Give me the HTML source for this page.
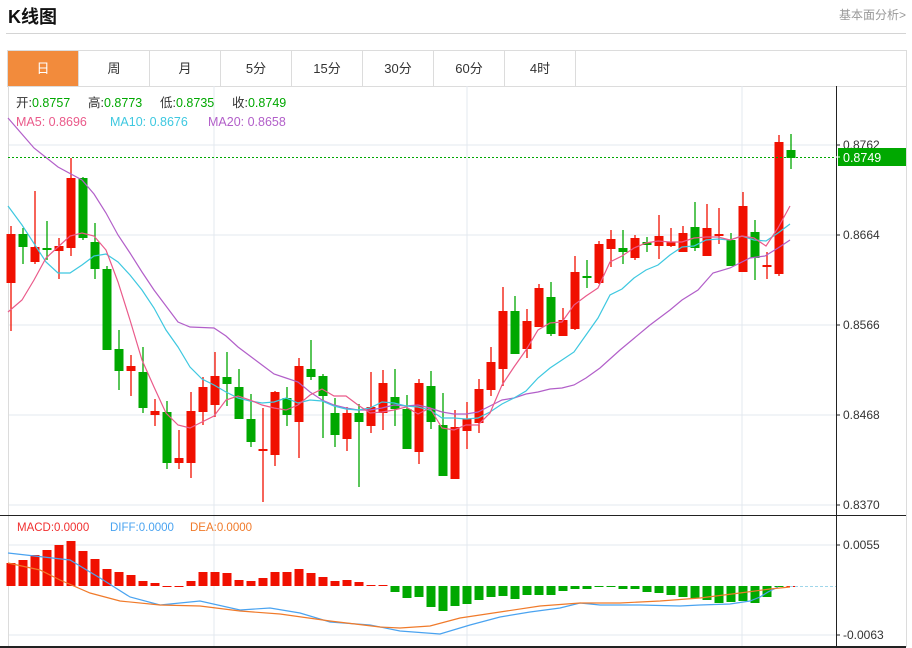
<!DOCTYPE html>
<html><head><meta charset="utf-8"><style>
body{margin:0;width:912px;height:648px;background:#fff;font-family:"Liberation Sans","Noto Sans CJK SC",sans-serif;overflow:hidden;position:relative}
.t{position:absolute;left:8px;top:3px;font-size:18px;font-weight:bold;color:#111}
.r{position:absolute;right:6px;top:6px;font-size:12px;color:#999}
.hr{position:absolute;left:6px;top:33px;width:900px;height:1px;background:#d4d4d4}
.tabs{position:absolute;left:7px;top:50px;width:898px;height:35px;border:1px solid #dcdcdc;display:flex}
.tabs div{width:70px;border-right:1px solid #dcdcdc;text-align:center;line-height:35px;font-size:13px;color:#333}
.tabs div.a{background:#f28b3c;color:#fff}
svg{position:absolute;left:0;top:0}
</style></head><body>
<div class="t">K线图</div><div class="r">基本面分析&gt;</div><div class="hr"></div>
<div class="tabs"><div class="a">日</div><div>周</div><div>月</div><div>5分</div><div>15分</div><div>30分</div><div>60分</div><div>4时</div></div>
<svg id="s" width="912" height="648" xmlns="http://www.w3.org/2000/svg" font-family="Liberation Sans, Noto Sans CJK SC, sans-serif"></svg>
<script>
var C=[[1,234,283,226,331],[0,234,247,228,264],[1,247,262,191,264],[0,248,250,221,260],[1,246,251,238,279],[1,178,248,158,256],[0,178,238,177,240],[0,242,269,223,279],[0,269,350,266,350],[0,349,371,330,390],[1,366,371,355,396],[0,372,408,347,413],[1,411,415,399,426],[0,412,463,401,469],[1,458,463,430,469],[1,411,463,392,478],[1,387,412,377,425],[1,376,405,352,417],[0,377,384,352,406],[0,387,419,369,419],[0,419,442,394,447],[1,449,451,408,502],[1,392,455,391,466],[0,398,415,387,426],[1,366,422,358,458],[0,369,377,340,380],[0,376,396,374,438],[0,413,435,398,447],[1,413,439,407,451],[0,413,422,404,487],[1,407,426,372,433],[1,383,413,370,430],[0,397,409,369,426],[0,409,449,395,449],[1,383,452,379,464],[0,386,422,371,429],[0,425,476,393,476],[1,427,479,410,479],[1,419,431,402,449],[1,389,423,379,433],[1,362,390,347,396],[1,311,369,287,386],[0,311,354,296,354],[1,321,349,309,358],[1,288,327,284,327],[0,297,334,282,336],[1,320,336,308,336],[1,272,329,256,330],[0,276,278,260,288],[1,244,283,241,284],[1,239,249,230,267],[0,248,252,230,264],[1,238,258,235,260],[0,242,245,237,252],[1,236,246,215,259],[1,242,246,228,247],[1,233,252,226,252],[0,227,248,202,251],[1,228,256,204,256],[1,234,236,208,244],[0,240,266,233,266],[1,206,272,192,272],[0,232,258,220,280],[1,265,267,252,279],[1,142,274,135,276],[0,150,158,134,169]];
var M=[563,560,555,550,545,541,551,559,569,572,575,581,583,586,586,581,572,572,573,580,581,578,572,572,569,573,577,581,580,582,585,585,592,598,597,607,611,606,604,600,597,596,599,595,595,595,591,589,589,587,587,589,589,592,593,595,597,598,600,603,602,601,603,597,586,586];
var P={ma20:["#b25fc9","8,118 34,148 58,167 82,180 94,194 106,213 118,235 130,253 142,272 154,290 166,306 178,322 190,327 214,328 226,336 238,347 250,356 262,365 274,374 286,378 298,382 310,392 322,400 334,405 346,408 358,410 370,410 382,408 394,405 406,406 418,405 430,408 442,412 454,414 466,414 478,412 490,406 502,400 514,398 526,394 538,392 550,389 562,388 574,385 586,378 600,368 620,350 650,325 670,310 682,300 698,290 713,273 730,268 750,258 765,256 778,248 790,240"],
ma10:["#3ec8e0","8,206 22,225 46,262 58,273 70,273 82,265 94,256 106,254 118,262 130,275 142,290 154,308 166,330 178,347 190,367 202,379 214,385 226,392 238,398 250,401 262,403 274,402 286,398 298,403 310,400 322,401 334,406 346,409 358,410 370,408 382,402 394,403 406,406 418,407 430,410 442,418 454,418 466,419 478,418 490,412 502,404 514,398 526,391 538,378 550,368 562,360 574,352 586,335 598,318 610,295 622,289 634,278 646,270 658,265 670,255 682,247 694,246 706,240 718,239 730,240 742,236 754,240 766,241 778,233 790,224"],
ma5:["#ea5a8a","8,312 22,300 34,280 46,258 58,247 70,236 82,233 94,236 106,250 118,282 130,320 142,360 154,387 166,413 178,425 190,428 202,422 214,416 226,400 238,396 250,400 262,405 274,408 286,410 298,405 310,395 322,389 334,396 346,396 358,405 370,413 382,412 394,410 406,407 418,414 430,408 442,428 454,430 466,425 478,425 490,413 502,385 514,367 526,350 538,330 550,323 562,322 574,305 586,296 598,288 610,262 622,256 634,248 646,243 658,241 670,242 682,242 694,238 706,237 718,237 730,240 742,236 754,238 766,246 778,228 790,206"],
diff:["#4aa3f0","8,553 70,560 100,578 130,597 160,605 200,601 240,610 270,608 300,613 330,622 370,625 400,631 440,634 470,625 500,617 530,612 560,608 580,603 600,605 640,605 680,606 700,605 730,604 750,601 760,597 768,592 778,587"],
dea:["#f07a2a","8,563 40,570 60,580 90,593 120,601 160,605 200,606 240,611 280,614 330,621 380,627 400,628 430,626 460,618 500,612 540,606 580,603 620,603 660,601 700,598 740,593 770,589 790,587"]};
var s='';
[145,235,325,415,505,545,635].forEach(function(y){s+='<line x1="8" x2="836" y1="'+y+'" y2="'+y+'" stroke="#e3e9ef"/>';});
[214,467,742].forEach(function(x){s+='<line x1="'+x+'" x2="'+x+'" y1="86" y2="647" stroke="#e3e9ef"/>';});
s+='<line x1="8.5" x2="8.5" y1="86" y2="647" stroke="#dcdcdc"/><line x1="906.5" x2="906.5" y1="86" y2="647" stroke="#dcdcdc"/>';
C.forEach(function(c,i){var x=11+12*i,col=c[0]?'#f01000':'#00a800';s+='<line x1="'+x+'" x2="'+x+'" y1="'+c[3]+'" y2="'+c[4]+'" stroke="'+col+'" stroke-width="1.3"/><rect x="'+(x-4.5)+'" y="'+c[1]+'" width="9" height="'+Math.max(1.5,c[2]-c[1])+'" fill="'+col+'"/>';});
M.forEach(function(v,i){var x=11+12*i,col=(i<32||i==65)?'#f01000':'#00a800';var y1=Math.min(v,586),h=Math.max(1,Math.abs(v-586));s+='<rect x="'+(x-4.5)+'" y="'+y1+'" width="9" height="'+h+'" fill="'+col+'"/>';});
s+='<line x1="790" x2="836" y1="586.5" y2="586.5" stroke="#9fd6ea" stroke-dasharray="3,2"/>';
for(var k in P)s+='<polyline points="'+P[k][1]+'" fill="none" stroke="'+P[k][0]+'" stroke-width="1.2"/>';
s+='<line x1="8" x2="836" y1="157.5" y2="157.5" stroke="#00a800" stroke-dasharray="2,2"/>';
s+='<line x1="0" x2="906" y1="515.5" y2="515.5" stroke="#222"/><line x1="0" x2="906" y1="647" y2="647" stroke="#222" stroke-width="2"/><line x1="836.5" x2="836.5" y1="86" y2="648" stroke="#222"/>';
[[145,'0.8762'],[235,'0.8664'],[325,'0.8566'],[415,'0.8468'],[505,'0.8370'],[545,'0.0055'],[635,'-0.0063']].forEach(function(a){s+='<line x1="836" x2="840" y1="'+a[0]+'" y2="'+a[0]+'" stroke="#222"/><text x="843" y="'+(a[0]+4)+'" font-size="12" fill="#333">'+a[1]+'</text>';});
s+='<rect x="838" y="148" width="68" height="18" fill="#00a800"/><line x1="836" x2="840" y1="157" y2="157" stroke="#fff"/><text x="843" y="162" font-size="12.5" fill="#fff">0.8749</text>';
[[16,'开:','0.8757'],[88,'高:','0.8773'],[160,'低:','0.8735'],[232,'收:','0.8749']].forEach(function(a){s+='<text x="'+a[0]+'" y="107" font-size="12.5" fill="#333">'+a[1]+'<tspan fill="#00a800">'+a[2]+'</tspan></text>';});
s+='<text x="16" y="126" font-size="12.5" fill="#ea5a8a">MA5: 0.8696</text><text x="110" y="126" font-size="12.5" fill="#3ec8e0">MA10: 0.8676</text><text x="208" y="126" font-size="12.5" fill="#b25fc9">MA20: 0.8658</text>';
s+='<text x="17" y="531" font-size="11.5" fill="#f03030">MACD:0.0000</text><text x="110" y="531" font-size="11.5" fill="#4aa3f0">DIFF:0.0000</text><text x="190" y="531" font-size="11.5" fill="#f07a2a">DEA:0.0000</text>';
document.getElementById('s').innerHTML=s;
</script>
</body></html>
